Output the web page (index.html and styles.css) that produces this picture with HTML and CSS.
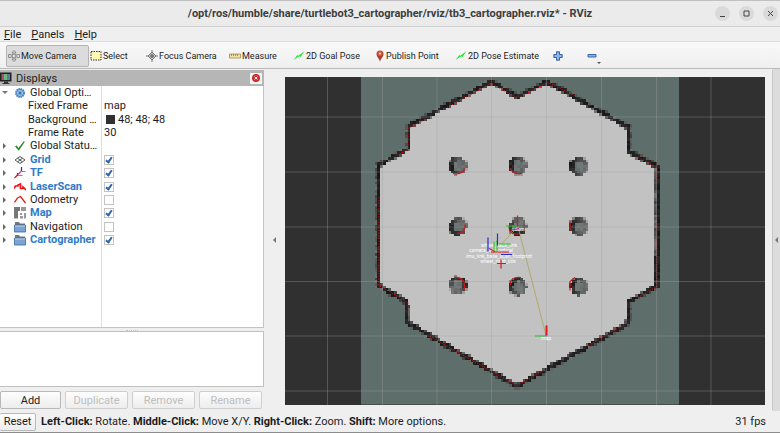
FILE: index.html
```
<!DOCTYPE html>
<html lang="en">

<head>
  <meta charset="UTF-8">
  <title>RViz</title>
  <link rel="stylesheet" href="styles.css">
</head>

<body>

  <header class="titlebar">
    <h1>/opt/ros/humble/share/turtlebot3_cartographer/rviz/tb3_cartographer.rviz* - RViz</h1>
    <div class="window-buttons">
      <button aria-label="Minimize"><svg viewBox="0 0 15 15"><path d="M5 10.500h5"/></svg></button>
      <button aria-label="Maximize"><svg viewBox="0 0 15 15"><path d="M5 5h5v5H5z"/></svg></button>
      <button aria-label="Close"><svg viewBox="0 0 15 15"><path d="M5 5l5 5M10 5l-5 5"/></svg></button>
    </div>
  </header>

  <nav class="menubar">
    <button><u>F</u>ile</button>
    <button><u>P</u>anels</button>
    <button><u>H</u>elp</button>
  </nav>

  <div class="toolbar">
    <button class="tool active">
      <svg width="12" height="12" viewBox="0 0 12 12" fill="#ddd" stroke="#777" stroke-width=".8"><path d="M6 .5l2 2H7v2.500H5V2.500H4zM6 11.500l2-2H7V7H5v2.500H4zM.5 4.500v3h2V7H5V5H2.500v-.5zM11.500 4.500v3h-2V7H7V5h2.500v-.5z"/><circle cx="6" cy="6" r="2"/></svg>
      Move Camera
    </button>
    <button class="tool">
      <svg width="12" height="12" viewBox="0 0 12 12"><path d="M1 1.500h10v8.500H1z" fill="#fff6b0" stroke="#333" stroke-dasharray="1.500 1"/></svg>
      Select
    </button>
    <button class="tool">
      <svg width="12" height="12" viewBox="0 0 12 12" fill="none" stroke="#777"><path d="M6 0v12M0 6h12"/><path d="M6 2l4 4-4 4-4-4z" fill="#ccc"/><circle cx="6" cy="6" r="1.500" fill="#777"/></svg>
      Focus Camera
    </button>
    <button class="tool">
      <svg width="12" height="12" viewBox="0 0 12 12"><path d="M.5 4h11v4H.5z" fill="#f1dfa4" stroke="#a08a50" stroke-width=".8"/><path d="M2.500 4v2M4.500 4v2M6.500 4v2M8.500 4v2" stroke="#8c7640" stroke-width=".7"/></svg>
      Measure
    </button>
    <button class="tool">
      <svg width="12" height="12" viewBox="0 0 12 12"><path d="M.5 10l4-5 1 .7L11.500 1 7.500 7 6.300 6.300z" fill="#1be82c"/></svg>
      2D Goal Pose
    </button>
    <button class="tool">
      <svg width="10" height="12" viewBox="0 0 10 12"><path d="M5 12C4.500 8.500 1.500 7 1.500 4a3.500 3.500 0 0 1 7 0C8.500 7 5.500 8.500 5 12z" fill="#a8402c"/><circle cx="5" cy="3.500" r="2.600" fill="#d7543f"/><circle cx="5" cy="3.500" r="1.100" fill="#f6d9d2"/></svg>
      Publish Point
    </button>
    <button class="tool">
      <svg width="12" height="12" viewBox="0 0 12 12"><path d="M.5 10l4-5 1 .7L11.500 1 7.500 7 6.300 6.300z" fill="#1be82c"/></svg>
      2D Pose Estimate
    </button>
    <button class="tool" aria-label="Add tool">
      <svg width="10" height="10" viewBox="0 0 10 10"><path d="M3.500.8h3v2.700h2.700v3H6.500v2.700h-3V6.500H.8v-3h2.700z" fill="#8db4e0" stroke="#3566ad"/></svg>
    </button>
    <button class="tool remove" aria-label="Remove tool">
      <svg width="15" height="18" viewBox="0 0 15 18"><path d="M1 7.500h8v2.500H1z" fill="#8db4e0" stroke="#3566ad"/><path d="M10 15h4l-2 2z" fill="#555"/></svg>
    </button>
  </div>

  <main>
    <section class="displays">
      <h2>
        <svg width="12" height="12" viewBox="0 0 12 12"><path d="M0 .5h11.500v9H0z" fill="#222"/><path d="M1.500 2H4v6H1.500z" fill="#a85070"/><path d="M4 2h3v6H4z" fill="#68b878"/><path d="M7 2h3v6H7z" fill="#577c9c"/><path d="M4 9.500h4V11h1.500v1h-7v-1H4z" fill="#333"/></svg>
        Displays
        <button class="close" aria-label="Close Displays"><svg width="8" height="8" viewBox="0 0 8 8"><circle cx="4" cy="4" r="4" fill="#d22a2a"/><path d="M2.500 2.500l3 3M5.500 2.500l-3 3" stroke="#fff"/></svg></button>
      </h2>

      <div class="tree">
        <table>
          <tbody>
            <tr>
              <td><span class="name"><i class="arrow open"></i><svg class="icon" viewBox="0 0 12 12"><circle cx="6" cy="6" r="4" fill="#6fa3d8" stroke="#4c84c0" stroke-width="2" stroke-dasharray="1.500 .6"/><circle cx="6" cy="6" r="2.500" fill="none" stroke="#c6dcf2" stroke-dasharray="1 1"/><circle cx="6" cy="6" r="1" fill="#2d68a8"/></svg>Global Opti…</span></td>
              <td></td>
            </tr>
            <tr>
              <td><span class="name child">Fixed Frame</span></td>
              <td>map</td>
            </tr>
            <tr>
              <td><span class="name child">Background …</span></td>
              <td><span class="swatch"></span>48; 48; 48</td>
            </tr>
            <tr>
              <td><span class="name child">Frame Rate</span></td>
              <td>30</td>
            </tr>
            <tr>
              <td><span class="name"><i class="arrow"></i><svg class="icon" viewBox="0 0 12 12"><path d="M1 6.500l1.600-1L4.500 8 9.500 1.500H11L4.800 10.800z" fill="#278a2c"/></svg>Global Statu…</span></td>
              <td></td>
            </tr>
            <tr>
              <td><label class="name on" for="grid"><i class="arrow"></i><svg class="icon" viewBox="0 0 12 12" fill="none" stroke="#555"><path d="M6 2.500L11 6 6 9.500 1 6zM3.500 4.200l5 3.600M8.500 4.200l-5 3.600"/></svg>Grid</label></td>
              <td><input type="checkbox" id="grid" checked></td>
            </tr>
            <tr>
              <td><label class="name on" for="tf"><i class="arrow"></i><svg class="icon" viewBox="0 0 12 12" fill="none" stroke-width="1.200"><path d="M.5 11L4 7.500" stroke="#e02020"/><path d="M3.500 6v3M7.500 0v4" stroke="#2222e0"/><path d="M4.500 8.500h4M8 4.500h3.500" stroke="#20d020"/><path d="M3.500 8l4-4" stroke="#d04070"/></svg>TF</label></td>
              <td><input type="checkbox" id="tf" checked></td>
            </tr>
            <tr>
              <td><label class="name on" for="laser"><i class="arrow"></i><svg class="icon" viewBox="0 0 12 12" fill="none" stroke="#ee1515" stroke-width="1.700"><path d="M0 7.500L1.500 5H4V4l2.500-1v4.500H9V6l3 3"/></svg>LaserScan</label></td>
              <td><input type="checkbox" id="laser" checked></td>
            </tr>
            <tr>
              <td><label class="name" for="odom"><i class="arrow"></i><svg class="icon" viewBox="0 0 12 12" fill="none" stroke="#ee1515" stroke-width="1.300"><path d="M.5 8.500L3.500 4l3-1.500L11.500 9"/></svg>Odometry</label></td>
              <td><input type="checkbox" id="odom"></td>
            </tr>
            <tr>
              <td><label class="name on" for="map"><i class="arrow"></i><svg class="icon" viewBox="0 0 12 12" fill="#777"><path d="M0 0h6v4H4v7.500H0z"/><path d="M7 0h5v4H7zM6 6h2v2H6zM6 9h3v2.500H6zM10 6h2v5.500h-2z" fill="#999"/></svg>Map</label></td>
              <td><input type="checkbox" id="map" checked></td>
            </tr>
            <tr>
              <td><label class="name" for="nav"><i class="arrow"></i><svg class="icon" viewBox="0 0 12 12"><path d="M1 1h4l1 1.500h5V5H1z" fill="#777"/><path d="M.5 4h11v7H.5z" fill="#7ba5d6" stroke="#3c689c" stroke-width=".8"/><path d="M1 5h10" stroke="#bcd2ec"/></svg>Navigation</label></td>
              <td><input type="checkbox" id="nav"></td>
            </tr>
            <tr>
              <td><label class="name on" for="carto"><i class="arrow"></i><svg class="icon" viewBox="0 0 12 12"><path d="M1 1h4l1 1.500h5V5H1z" fill="#777"/><path d="M.5 4h11v7H.5z" fill="#7ba5d6" stroke="#3c689c" stroke-width=".8"/><path d="M1 5h10" stroke="#bcd2ec"/></svg>Cartographer</label></td>
              <td><input type="checkbox" id="carto" checked></td>
            </tr>
          </tbody>
        </table>
      </div>

      <div class="splitter"></div>
      <div class="help"></div>

      <div class="actions">
        <button>Add</button>
        <button disabled>Duplicate</button>
        <button disabled>Remove</button>
        <button disabled>Rename</button>
      </div>
    </section>

    <button class="collapse" aria-label="Hide left panel"><i></i></button>

    <svg class="scene" viewBox="285 76 480 329" preserveAspectRatio="xMidYMid slice">
      <path d="M361 76h318v328H361z" fill="#5e6e6b"/>
      <path id="free" fill="#c2c2c2" d="M491 81L518 96L547 81L629 127L629 151L658 166L657 286L629 301L628 323L517 386L407 322L406 301L378 285L378 165L408 148L408 126Z"/>
      <g id="cells" shape-rendering="crispEdges"></g>
      <g fill="none" stroke="#d81414" stroke-dasharray="1.200 1.500">
        <path d="M517 97l-26-14-46 25M425 119l-17 9v21l-11 6M379 197v88l29 17v6M430 336l87 49 28-16M588 345l40-23M638 297l19-11V218M657 182v-15l-19-10M575 95l-27-13-29 15"/>
      </g>
      <g class="grid-lines">
        <path d="M327.500 76v329M382.500 76v329M437 76v329M491.500 76v329M546.500 76v329M601.500 76v329M656.500 76v329M711 76v329"/>
        <path d="M285 116.500h480M285 171.500h480M285 226.500h480M285 281h480M285 335.500h480M285 390.500h480"/>
      </g>
      <g fill="none" stroke="#d01616" stroke-width="1.200">
        <path d="M465 168c-2 5-6 6-12 5M510 168c2 4 5 6 12 5M465 224c1 6-3 9-8 9M509 226c0 6 5 9 11 7M454 277c8-1 12 4 10 12M510 285c0-6 4-9 11-8M570 221v9M570 290v-9l5-4"/>
      </g>
      <path d="M502 243l16-17 28 109" fill="none" stroke="#a8a558" stroke-width=".8"/>
      <g class="frames">
        <text x="499" y="246">wheel_back_link</text>
        <text x="491" y="251">camera_link_optical</text>
        <text x="499" y="257">imu_link_base_scan_footprint</text>
        <text x="498" y="262">wheel_right_link</text>
        <text x="518" y="230">odom</text>
        <text x="546" y="339">map</text>
      </g>
      <g fill="none">
        <path d="M517.500 215v11M489 248l6 3M491 251.500h18M501 259v9M497 263h9" stroke="#d81818" stroke-width="1.200"/>
        <path d="M546.500 325v10" stroke="#e81818" stroke-width="2"/>
        <path d="M506 225.500h11M535 335.500h10M494 241v10M499 243.500h12M497 240v10" stroke="#18c818"/>
        <path d="M488 237v14M497.500 233v12M501 254h11" stroke="#2a2ad8" stroke-width="1.200"/>
        <path d="M514 229l5-1M546 333v3" stroke="#c020b0"/>
      </g>
    </svg>

    <button class="collapse right" aria-label="Show right panel"><i></i></button>
  </main>

  <footer class="status">
    <button>Reset</button>
    <p><b>Left-Click:</b> Rotate. <b>Middle-Click:</b> Move X/Y. <b>Right-Click:</b> Zoom. <b>Shift:</b> More options.</p>
    <span class="fps">31 fps</span>
  </footer>

  <script src="map.js"></script>

</body>

</html>
```
FILE: styles.css
```
body {
  font-family: Roboto, "Noto Sans", sans-serif;
  font-size: 11px;
  line-height: 13px;
  margin: 0;
  height: 100vh;
  display: flex;
  flex-direction: column;
  box-sizing: border-box;
  border-top: 1px solid #c0c0c0;
  border-bottom: 1px solid #8c8c8c;
  background: #efefef;
  color: #1c1c1c;
  overflow: hidden;
}

button {
  font: inherit;
  color: inherit;
  margin: 0;
  padding: 0;
  border: none;
  background: none;
}

h1,
h2,
p {
  margin: 0;
  font-size: 11px;
}

.titlebar {
  display: grid;
  grid-template-columns: 1fr auto 1fr;
  align-items: center;
  height: 25px;
  background: #ebebeb;
  border-bottom: 1px solid #cfcfcf;
}

.titlebar h1 {
  grid-column: 2;
  color: #3d3d3d;
}

.window-buttons {
  display: flex;
  justify-content: flex-end;
  gap: 9px;
  padding-right: 2px;
}

.window-buttons button {
  width: 15px;
  height: 15px;
  border-radius: 50%;
  background: #dadada;
}

.window-buttons svg {
  display: block;
  fill: none;
  stroke: #444;
}

.menubar {
  display: flex;
  gap: 10px;
  padding: 0 4px;
  height: 14px;
  border-bottom: 1px solid #dcdcdc;
}

.toolbar {
  display: grid;
  grid-template-columns: 83px 56px 83px 64px 82px 80px 98px 34px 30px;
  height: 26px;
  padding-left: 6px;
  background: linear-gradient(#f9f9f9, #efefef);
  border-bottom: 1px solid #b9b9b9;
  font-size: 9px;
}

.tool {
  display: flex;
  align-items: center;
  gap: 1px;
  padding: 2px 1px 0;
  white-space: nowrap;
}

.tool.active {
  margin: 3px 0 1px;
  padding: 0 1px;
  background: #dcdcdc;
  border: 1px solid #b4b4b4;
  border-radius: 2px;
}

main {
  flex: 1;
  min-height: 0;
  display: flex;
}

.displays {
  width: 264px;
  display: flex;
  flex-direction: column;
}

.displays h2 {
  display: flex;
  align-items: center;
  gap: 4px;
  height: 16px;
  margin-top: 1px;
  font-weight: normal;
  background: #b6b6b6;
}

.close {
  display: grid;
  place-items: center;
  width: 12px;
  height: 11px;
  margin: 0 2px 0 auto;
  background: #f6f6f6;
  border-radius: 1px;
}

.tree {
  flex: 1;
  display: flex;
  flex-direction: column;
  background: #fff;
  border-right: 1px solid #c4c4c4;
  border-bottom: 1px solid #c4c4c4;
}

.tree::after {
  content: "";
  flex: 1;
  width: 101px;
  border-right: 1px solid #dedede;
}

table {
  width: 100%;
  height: 161px;
  border-collapse: collapse;
  table-layout: fixed;
}

td {
  padding: 0;
  line-height: 12px;
  white-space: nowrap;
}

td:first-child {
  width: 101px;
  border-right: 1px solid #dedede;
}

td:last-child {
  padding-left: 2px;
}

.name {
  display: flex;
  align-items: center;
}

.name.child {
  padding-left: 28px;
}

.name.on {
  color: #2f7bc8;
  font-weight: bold;
}

.icon {
  flex: none;
  width: 12px;
  height: 12px;
  margin-right: 4px;
}

.arrow {
  width: 0;
  margin: 0 8px 0 3px;
  border: 3px solid transparent;
  border-left: 3px solid #666;
  border-right: 0;
}

.arrow.open {
  margin: 0 6px 0 2px;
  border: 3px solid transparent;
  border-top: 3px solid #777;
  border-bottom: 0;
}

.swatch {
  display: inline-block;
  width: 9px;
  height: 9px;
  margin: 0 3px 0 2px;
  vertical-align: -1px;
  background: #303030;
}

input[type="checkbox"] {
  appearance: none;
  display: block;
  width: 10px;
  height: 10px;
  margin: 0;
  border: 1px solid #c3c3c3;
  background: #fff;
}

input[type="checkbox"]:checked::before {
  content: "";
  display: block;
  width: 2px;
  height: 5px;
  margin: 0 2px;
  border: solid #2c63a8;
  border-width: 0 2px 2px 0;
  transform: rotate(35deg);
}

.splitter {
  height: 2px;
  width: 12px;
  margin: 0 auto;
  border-bottom: 1px dotted #c8c8c8;
}

.help {
  height: 54px;
  background: #fff;
  border: solid #c0c0c0;
  border-width: 1px 1px 1px 0;
}

.actions {
  display: grid;
  grid-template-columns: 61px 1fr 1fr 1fr;
  gap: 4px;
  padding: 4px 2px 2px 0;
}

.actions button,
.status button {
  height: 18px;
  border: 1px solid #b8b8b8;
  border-radius: 2px;
  background: linear-gradient(#fdfdfd, #ededed);
}

.actions button:disabled {
  color: #bebebe;
  border-color: #cfcfcf;
}

.collapse {
  width: 21px;
  display: grid;
  place-items: center;
}

.collapse i {
  border: 3px solid transparent;
  border-right-color: #777;
  border-left: 0;
}

.collapse.right {
  width: 8px;
  margin-left: 7px;
  background: #dcdcdc;
  border-left: 1px solid #c6c6c6;
  border-radius: 2px 0 0 2px;
}

.scene {
  flex: 1;
  min-width: 0;
  margin: 8px 0 6px;
  background: #303030;
}

.grid-lines {
  fill: none;
  stroke: #a0a0a0;
  stroke-opacity: 0.35;
}

.frames {
  fill: #fff;
  font-size: 5px;
  text-anchor: middle;
}

.status {
  display: flex;
  align-items: center;
  gap: 5px;
  height: 21px;
  padding-right: 14px;
}

.status button {
  width: 36px;
  border-left: 0;
}

.fps {
  margin-left: auto;
}
```
FILE: map.js
```
const SVG_NS = 'http://www.w3.org/2000/svg';
const CELL = 2.74;
const ORIGIN = { x: 361, y: 77 };

const free = document.getElementById('free');
const cells = document.getElementById('cells');

// corners of the arena
const walls = free.getAttribute('d').match(/[\d.]+/g).map(Number);

// centre of each pillar and the angle (degrees) of its scanned side
const pillars = [
  [458, 165, 160], [518, 165, 180], [579, 166, 190],
  [458, 226, 150], [518, 226, 130], [579, 226, 200],
  [458, 285, 300], [518, 286, 215], [579, 286, 190]
];

function noise(x, y) {
  const n = Math.sin(x * 12.9 + y * 78.2) * 43758.5;
  return n - Math.floor(n);
}

function segmentDistance(px, py, ax, ay, bx, by) {
  const dx = bx - ax;
  const dy = by - ay;
  const t = Math.max(0, Math.min(1, ((px - ax) * dx + (py - ay) * dy) / (dx * dx + dy * dy)));
  return Math.hypot(px - ax - t * dx, py - ay - t * dy);
}

function wallDistance(x, y) {
  let best = Infinity;
  for (let i = 0; i < walls.length; i += 2) {
    const j = (i + 2) % walls.length;
    best = Math.min(best, segmentDistance(x, y, walls[i], walls[i + 1], walls[j], walls[j + 1]));
  }
  return best;
}

function addCell(x, y, fill) {
  const rect = document.createElementNS(SVG_NS, 'rect');
  rect.setAttribute('x', x - CELL / 2);
  rect.setAttribute('y', y - CELL / 2);
  rect.setAttribute('width', CELL);
  rect.setAttribute('height', CELL);
  rect.setAttribute('fill', fill);
  cells.appendChild(rect);
}

function gray(v) {
  const n = Math.round(v);
  return `rgb(${n}, ${n}, ${n})`;
}

function pillarColor(x, y) {
  for (const [cx, cy, angle] of pillars) {
    const r = Math.hypot(x - cx, y - cy);
    if (r > 10) continue;
    const a = angle * Math.PI / 180;
    const side = ((x - cx) * Math.cos(a) + (y - cy) * Math.sin(a)) / (r || 1);
    if (r > 9) return noise(x, y) > 0.4 ? gray(150 - side * 25) : null;
    if (r > 5) return gray(60 - side * 38 + noise(x, y) * 25);
    return noise(x, y) > 0.5 ? '#66716f' : '#727877';
  }
  return null;
}

for (let row = 0; row < 119; row++) {
  for (let col = 0; col < 116; col++) {
    const x = ORIGIN.x + (col + 0.5) * CELL;
    const y = ORIGIN.y + (row + 0.5) * CELL;
    const d = wallDistance(x, y);
    if (d < 1.7) {
      addCell(x, y, gray(22 + noise(x, y) * 22));
    } else if (d < 2.8) {
      addCell(x, y, gray(65 + noise(x, y) * 50));
    } else {
      const color = pillarColor(x, y);
      if (color) addCell(x, y, color);
    }
  }
}
```
